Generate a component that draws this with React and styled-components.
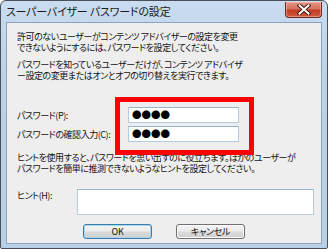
import React from 'react'
import styled, { createGlobalStyle } from 'styled-components'

const Global = createGlobalStyle`
    html, body {
        margin: 0;
        padding: 0;
        background: #ffffff;
    }
    body {
        width: 328px;
        height: 249px;
        overflow: hidden;
        font-family: "Noto Sans CJK JP", "Liberation Sans", sans-serif;
        font-feature-settings: "palt";
        color: #111;
    }
`

const Window = styled.div`
    position: relative;
    box-sizing: border-box;
    width: 328px;
    height: 249px;
    border: 1px solid #4b4f57;
    border-radius: 6px 6px 2px 2px;
    background: linear-gradient(180deg, #c9dcf0 0%, #bcd2ea 30%, #b8cfe8 100%);
    padding: 0 5px 4px 5px;
    display: flex;
    flex-direction: column;
`

const TitleBar = styled.div`
    height: 21px;
    display: flex;
    align-items: flex-start;
    justify-content: space-between;
`

const Title = styled.span`
    font-size: 11px;
    line-height: 21px;
    color: #1a1a1a;
    white-space: nowrap;
    letter-spacing: -0.2px;
`

const CloseButton = styled.div`
    width: 37px;
    height: 16px;
    margin-top: 1px;
    box-sizing: border-box;
    border: 1px solid #6e2a20;
    border-top: none;
    border-radius: 0 0 4px 4px;
    background: linear-gradient(180deg, #e49584 0%, #d6735f 45%, #c13b24 55%, #cf5a40 100%);
    box-shadow: inset 0 0 0 1px rgba(255, 210, 200, 0.45);
    display: flex;
    align-items: center;
    justify-content: center;
`

const Panel = styled.div`
    flex: 1;
    box-sizing: border-box;
    border: 1px solid #8ea3bb;
    background: #eeeeee;
    padding: 8px 7px 4px 10px;
    display: flex;
    flex-direction: column;
`

const Paragraph = styled.p`
    margin: ${p => p.$top}px 0 0 0;
    font-size: 9px;
    line-height: 11px;
    white-space: nowrap;
    letter-spacing: -0.45px;
`

const Row = styled.div`
    display: flex;
    align-items: ${p => (p.$top ? 'flex-start' : 'center')};
    margin-top: ${p => p.$gap}px;
`

const Label = styled.label`
    width: ${p => p.$width}px;
    flex: none;
    font-size: 9px;
    line-height: 11px;
    white-space: nowrap;
    letter-spacing: -0.45px;
    padding-top: ${p => (p.$top ? 1 : 0)}px;
`

const Field = styled.div`
    box-sizing: border-box;
    width: ${p => p.$width}px;
    height: ${p => p.$height}px;
    background: #ffffff;
    border: 1px solid #b5cbe0;
    border-top-color: #9ab3cc;
    display: flex;
    align-items: center;
    padding-left: 3px;
    font-size: 9.5px;
    line-height: 1;
    letter-spacing: 0;
    font-feature-settings: normal;
    color: #000;
`

const Buttons = styled.div`
    display: flex;
    justify-content: center;
    gap: 24px;
    margin-top: 9px;
    padding-right: 3px;
`

const Button = styled.div`
    box-sizing: border-box;
    width: 69px;
    height: 15px;
    border: 1px solid ${p => (p.$primary ? '#3d7bad' : '#707070')};
    border-radius: 3px;
    background: linear-gradient(180deg, #f4f4f4 0%, #ebebeb 48%, #dcdcdc 52%, #cfcfcf 100%);
    box-shadow: inset 0 0 0 1px ${p => (p.$primary ? '#a8d8f0' : '#fbfbfb')};
    font-size: 9px;
    line-height: 13px;
    text-align: center;
    letter-spacing: -0.3px;
`

const Highlight = styled.div`
    position: absolute;
    left: 114px;
    top: 96px;
    width: 139px;
    height: 58px;
    box-sizing: border-box;
    border: 5px solid #ff0000;
`

const CloseIcon = () => (
  <svg width="14" height="11" viewBox="0 0 14 11">
    <path d="M2.5 1.5 L11.5 9.5 M11.5 1.5 L2.5 9.5" stroke="#4a1a14" strokeWidth="4" strokeLinecap="square" />
    <path d="M2.5 1.5 L11.5 9.5 M11.5 1.5 L2.5 9.5" stroke="#ffffff" strokeWidth="2" strokeLinecap="square" />
  </svg>
)

const App = () => {
  return (
    <>
      <Global />
      <Window>
        <TitleBar>
          <Title>スーパーバイザー パスワードの設定</Title>
          <CloseButton>
            <CloseIcon />
          </CloseButton>
        </TitleBar>
        <Panel>
          <Paragraph $top={0}>
            許可のないユーザーがコンテンツ アドバイザーの設定を変更<br />
            できないようにするには、パスワードを設定してください。
          </Paragraph>
          <Paragraph $top={6}>
            パスワードを知っているユーザーだけが、コンテンツ アドバイザ<br />
            ー設定の変更またはオンとオフの切り替えを実行できます。
          </Paragraph>
          <Row $gap={26}>
            <Label $width={111}>パスワード(P):</Label>
            <Field $width={111} $height={16}>●●●●</Field>
          </Row>
          <Row $gap={3}>
            <Label $width={111}>パスワードの確認入力(C):</Label>
            <Field $width={111} $height={16}>●●●●</Field>
          </Row>
          <Paragraph $top={10}>
            ヒントを使用すると、パスワードを思い出すのに役立ちます。ほかのユーザーが<br />
            パスワードを簡単に推測できないようなヒントを設定してください。
          </Paragraph>
          <Row $gap={15} $top>
            <Label $width={60} $top>ヒント(H):</Label>
            <Field $width={237} $height={26} />
          </Row>
          <Buttons>
            <Button $primary>OK</Button>
            <Button>キャンセル</Button>
          </Buttons>
        </Panel>
        <Highlight />
      </Window>
    </>
  )
}

export default App
